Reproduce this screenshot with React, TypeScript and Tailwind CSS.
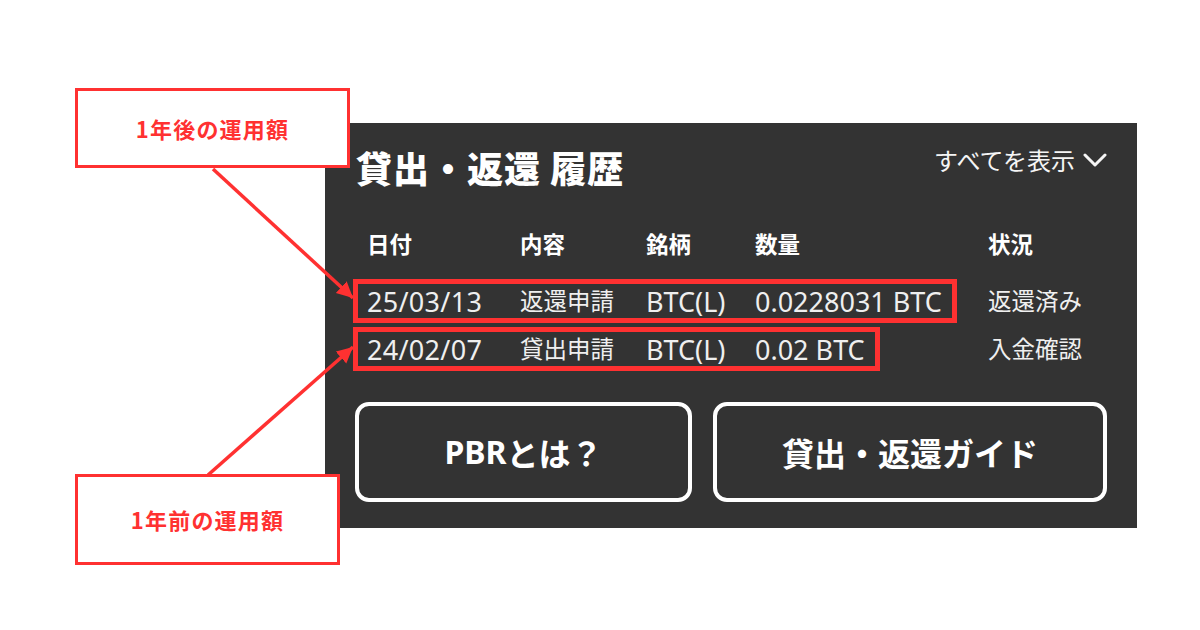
import { type ReactNode } from "react"

const red = "#ff3131"

interface HistoryRow {
  date: string
  kind: string
  brand: string
  amount: string
  status: string
}

const rows: HistoryRow[] = [
  { date: "25/03/13", kind: "返還申請", brand: "BTC(L)", amount: "0.0228031 BTC", status: "返還済み" },
  { date: "24/02/07", kind: "貸出申請", brand: "BTC(L)", amount: "0.02 BTC", status: "入金確認" },
]

function Callout({ className, children }: { className: string; children: ReactNode }) {
  return (
    <div
      className={`absolute flex items-center justify-center border-[3px] border-[#ff3131] bg-white font-['Noto_Sans_CJK_JP',sans-serif] text-[22px] font-bold tracking-[1.2px] text-[#ff3131] ${className}`}
    >
      {children}
    </div>
  )
}

function Arrows() {
  return (
    <svg className="pointer-events-none absolute inset-0" width="1200" height="630" viewBox="0 0 1200 630">
      <defs>
        <marker
          id="head"
          markerUnits="userSpaceOnUse"
          markerWidth="18"
          markerHeight="18"
          refX="16"
          refY="8"
          orient="auto"
        >
          <path d="M0 0 L16 8 L0 16 Z" fill={red} />
        </marker>
      </defs>
      {/* 上の吹き出し → 1行目 */}
      <line x1="213" y1="169" x2="353" y2="298" stroke={red} strokeWidth="3.5" markerEnd="url(#head)" />
      {/* 下の吹き出し → 2行目 */}
      <line x1="208" y1="475" x2="353" y2="347" stroke={red} strokeWidth="3.5" markerEnd="url(#head)" />
    </svg>
  )
}

function Row({ row }: { row: HistoryRow }) {
  return (
    <div className="grid grid-cols-[635px_1fr] items-center">
      <div className="flex">
        <div className="flex h-[44px] items-center border-[5px] border-[#ff3131] pl-[9px] pr-[10px] text-[#efefef]">
          <span className="w-[153px] font-['Noto_Sans','Noto_Sans_CJK_JP',sans-serif] text-[27px] leading-none tracking-[0.3px]">{row.date}</span>
          <span className="w-[126px] font-['Noto_Sans_CJK_JP',sans-serif] text-[23.5px] leading-none">{row.kind}</span>
          <span className="w-[109px] font-['Noto_Sans','Noto_Sans_CJK_JP',sans-serif] text-[27px] leading-none">{row.brand}</span>
          <span className="font-['Noto_Sans','Noto_Sans_CJK_JP',sans-serif] text-[27px] leading-none">{row.amount}</span>
        </div>
      </div>
      <span className="font-['Noto_Sans_CJK_JP',sans-serif] text-[23.5px] leading-none text-[#efefef]">{row.status}</span>
    </div>
  )
}

export default function App() {
  return (
    <div className="relative h-[630px] w-[1200px] overflow-hidden bg-white pl-[325px] pt-[123px]">
      <div className="h-[405px] w-[812px] bg-[#333333] px-[28px] pt-[26px] font-['Noto_Sans_CJK_JP',sans-serif] text-white">
        <div className="flex items-start justify-between pl-[3px] pr-[2px]">
          <h2 className="text-[36px] font-black leading-none tracking-[1px]">貸出・返還 履歴</h2>
          <button className="-mt-[1px] flex items-center gap-[8px] text-[24px] leading-none text-[#f5f5f5]">
            すべてを表示
            <svg width="24" height="14" viewBox="0 0 24 14" fill="none">
              <path d="M2 2 L12 12 L22 2" stroke="currentColor" strokeWidth="3" strokeLinecap="round" strokeLinejoin="round" />
            </svg>
          </button>
        </div>

        <div className="mt-[36px] grid grid-cols-[635px_1fr] items-center">
          <div className="flex h-[44px] items-center border-[5px] border-transparent pl-[9px] text-[22.5px] font-bold leading-none">
            <span className="w-[153px]">日付</span>
            <span className="w-[126px]">内容</span>
            <span className="w-[109px]">銘柄</span>
            <span>数量</span>
          </div>
          <span className="text-[22.5px] font-bold leading-none">状況</span>
        </div>

        <div className="mt-[14px] flex flex-col gap-[4px]">
          {rows.map((row) => (
            <Row key={row.date} row={row} />
          ))}
        </div>

        <div className="mt-[31px] flex gap-[21px] pl-[2px]">
          <button className="flex h-[100px] w-[337px] items-center justify-center rounded-[14px] border-4 border-white text-[32px] font-bold">
            <span className="font-['Noto_Sans','Noto_Sans_CJK_JP',sans-serif]">PBR</span>とは？
          </button>
          <button className="flex h-[100px] w-[394px] items-center justify-center rounded-[14px] border-4 border-white text-[32px] font-bold">
            貸出・返還ガイド
          </button>
        </div>
      </div>

      <Callout className="left-[75px] top-[88px] h-[80px] w-[275px]">1年後の運用額</Callout>
      <Callout className="left-[75px] top-[474px] h-[91px] w-[265px]">1年前の運用額</Callout>
      <Arrows />
    </div>
  )
}
